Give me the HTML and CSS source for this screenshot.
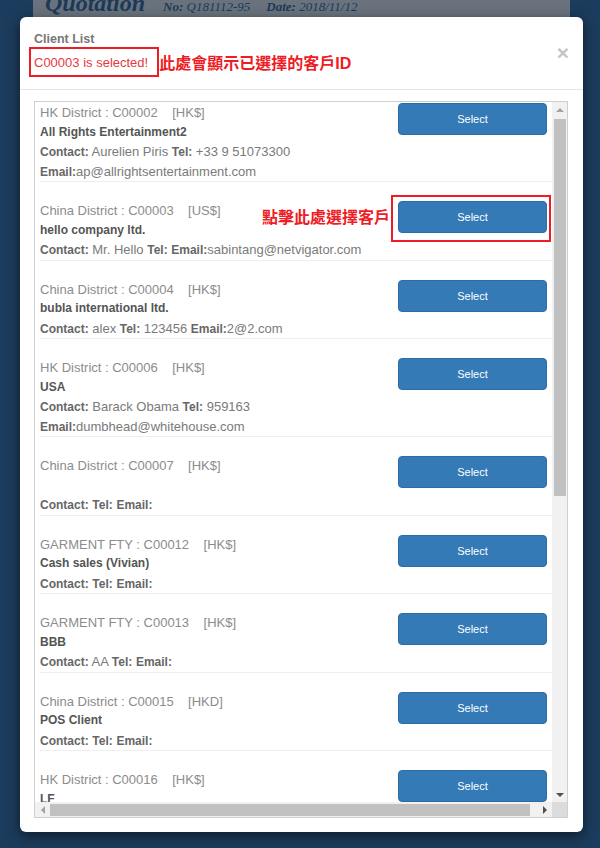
FILE: index.html
```html
<!DOCTYPE html>
<html lang="zh-Hant">
<head>
    <meta charset="UTF-8">
    <title>Client List</title>
    <link rel="stylesheet" href="styles.css">
</head>
<body>
<div class="page">
    <div class="quote-head">
        <span class="quote-title">Quotation</span>
        <span class="quote-meta"><b>No:</b> Q181112-95</span>
        <span class="quote-meta"><b>Date:</b> 2018/11/12</span>
    </div>
</div>

<div class="modal">
    <div class="modal-header">
        <span class="close">&times;</span>
        <h4 class="modal-title">Client List</h4>
        <div class="selected-line">
            <span class="note-box"><span class="selected">C00003 is selected!</span></span><span class="note">此處會顯示已選擇的客戶ID</span>
        </div>
    </div>
    <div class="modal-body">
        <div class="client-box">
            <div class="viewport">
                <div class="client-list">
                    <div class="client">
                        <div class="info">
                            <div class="district">HK District : C00002&nbsp;&nbsp;&nbsp;&nbsp;[HK$]</div>
                            <div class="name">All Rights Entertainment2</div>
                            <div class="contact"><b>Contact:</b> Aurelien Piris <b>Tel:</b> +33 9 51073300 <b>Email:</b>ap@allrightsentertainment.com</div>
                        </div>
                        <div class="pick"><button class="btn-select">Select</button></div>
                    </div>
                    <div class="client">
                        <div class="info">
                            <div class="district">China District : C00003&nbsp;&nbsp;&nbsp;&nbsp;[US$]</div>
                            <div class="name">hello company ltd.</div>
                            <div class="contact"><b>Contact:</b> Mr. Hello <b>Tel:</b> <b>Email:</b>sabintang@netvigator.com</div>
                        </div>
                        <div class="pick">
                            <button class="btn-select">Select</button>
                            <span class="tip">點擊此處選擇客戶</span>
                            <span class="tip-frame"></span>
                        </div>
                    </div>
                    <div class="client">
                        <div class="info">
                            <div class="district">China District : C00004&nbsp;&nbsp;&nbsp;&nbsp;[HK$]</div>
                            <div class="name">bubla international ltd.</div>
                            <div class="contact"><b>Contact:</b> alex <b>Tel:</b> 123456 <b>Email:</b>2@2.com</div>
                        </div>
                        <div class="pick"><button class="btn-select">Select</button></div>
                    </div>
                    <div class="client">
                        <div class="info">
                            <div class="district">HK District : C00006&nbsp;&nbsp;&nbsp;&nbsp;[HK$]</div>
                            <div class="name">USA</div>
                            <div class="contact"><b>Contact:</b> Barack Obama <b>Tel:</b> 959163 <b>Email:</b>dumbhead@whitehouse.com</div>
                        </div>
                        <div class="pick"><button class="btn-select">Select</button></div>
                    </div>
                    <div class="client">
                        <div class="info">
                            <div class="district">China District : C00007&nbsp;&nbsp;&nbsp;&nbsp;[HK$]</div>
                            <div class="name"></div>
                            <div class="contact"><b>Contact:</b> <b>Tel:</b> <b>Email:</b></div>
                        </div>
                        <div class="pick"><button class="btn-select">Select</button></div>
                    </div>
                    <div class="client">
                        <div class="info">
                            <div class="district">GARMENT FTY : C00012&nbsp;&nbsp;&nbsp;&nbsp;[HK$]</div>
                            <div class="name">Cash sales (Vivian)</div>
                            <div class="contact"><b>Contact:</b> <b>Tel:</b> <b>Email:</b></div>
                        </div>
                        <div class="pick"><button class="btn-select">Select</button></div>
                    </div>
                    <div class="client">
                        <div class="info">
                            <div class="district">GARMENT FTY : C00013&nbsp;&nbsp;&nbsp;&nbsp;[HK$]</div>
                            <div class="name">BBB</div>
                            <div class="contact"><b>Contact:</b> AA <b>Tel:</b> <b>Email:</b></div>
                        </div>
                        <div class="pick"><button class="btn-select">Select</button></div>
                    </div>
                    <div class="client">
                        <div class="info">
                            <div class="district">China District : C00015&nbsp;&nbsp;&nbsp;&nbsp;[HKD]</div>
                            <div class="name">POS Client</div>
                            <div class="contact"><b>Contact:</b> <b>Tel:</b> <b>Email:</b></div>
                        </div>
                        <div class="pick"><button class="btn-select">Select</button></div>
                    </div>
                    <div class="client">
                        <div class="info">
                            <div class="district">HK District : C00016&nbsp;&nbsp;&nbsp;&nbsp;[HK$]</div>
                            <div class="name">LF</div>
                            <div class="contact"><b>Contact:</b> <b>Tel:</b> <b>Email:</b></div>
                        </div>
                        <div class="pick"><button class="btn-select">Select</button></div>
                    </div>
                </div>
            </div>
            <div class="vbar">
                <span class="arrow arrow-up"></span>
                <span class="thumb thumb-v"></span>
                <span class="arrow arrow-down"></span>
            </div>
            <div class="hbar">
                <span class="arrow arrow-left"></span>
                <span class="thumb thumb-h"></span>
                <span class="arrow arrow-right"></span>
            </div>
            <div class="corner"></div>
        </div>
    </div>
</div>
</body>
</html>
```

FILE: styles.css
```css
* {
    padding: 0;
    margin: 0;
    box-sizing: border-box;
}

body {
    background: #1c3c5d;
    font-family: "Liberation Sans", Arial, "Noto Sans CJK TC", sans-serif;
    width: 600px;
    height: 848px;
    overflow: hidden;
    position: relative;
}

/* page behind the dialog */
.page {
    margin-left: 33px;
    width: 537px;
    height: 120px;
    background: #6a737d;
    overflow: hidden;
}

.quote-head {
    margin-top: -9px;
    padding-left: 12px;
    line-height: 24px;
    color: #1c3a58;
    font-family: "Liberation Serif", serif;
    font-style: italic;
    white-space: nowrap;
}

.quote-title {
    font-size: 24px;
    font-weight: bold;
    margin-right: 14px;
}

.quote-meta {
    font-size: 13px;
    margin-right: 12px;
}

/* dialog */
.modal {
    position: absolute;
    left: 20px;
    top: 17px;
    width: 563px;
    height: 815px;
    background: #fff;
    border-radius: 6px;
    box-shadow: 0 4px 14px rgba(0, 0, 0, .55);
}

.modal-header {
    position: relative;
    padding: 14px 15px 12px 14px;
    border-bottom: 1px solid #e5e5e5;
}

.modal-title {
    font-size: 12.5px;
    line-height: 16px;
    color: #777;
}

.close {
    position: absolute;
    top: 25px;
    right: 14px;
    font-size: 21px;
    line-height: 1;
    font-weight: bold;
    color: #c4c4c4;
}

.selected-line {
    display: flex;
    align-items: center;
    margin-left: -5px;
}

.note-box {
    border: 2px solid #ee1c24;
    padding: 3px 9px 3px 3px;
    line-height: 19px;
}

.selected {
    font-size: 13px;
    color: #e8383d;
}

.note {
    font-size: 16px;
    font-weight: bold;
    color: #ee1c24;
    font-family: "Liberation Sans", "Noto Sans CJK TC", sans-serif;
}

.modal-body {
    padding: 11px 15px 14px 14px;
}

/* list box with its scrollbars */
.client-box {
    height: 717px;
    border: 1px solid #cfcfcf;
    display: grid;
    grid-template-columns: 1fr 15px;
    grid-template-rows: 1fr 15px;
}

.viewport {
    overflow: hidden;
}

.client-list {
    width: 530px;
    padding: 1px 0 0 5px;
}

.client {
    display: flex;
    border-bottom: 1px solid #efefef;
    margin-bottom: 19px;
    font-size: 13px;
    line-height: 19.5px;
}

.info {
    width: 350px;
    color: #7a7a7a;
}

.district {
    color: #8c8c8c;
}

.name {
    font-size: 12px;
    font-weight: bold;
    color: #555;
    height: 19.5px;
}

.contact b {
    font-size: 12px;
    line-height: 1;
    color: #666;
}

.pick {
    position: relative;
    margin-left: 8px;
}

.btn-select {
    display: block;
    width: 149px;
    height: 32px;
    background: #337ab7;
    border: 1px solid #2e6da4;
    border-radius: 4px;
    color: #fff;
    font-family: "Liberation Sans", Arial, sans-serif;
    font-size: 11px;
}

.tip {
    position: absolute;
    right: calc(100% + 8px);
    top: 7px;
    white-space: nowrap;
    font-size: 16px;
    font-weight: bold;
    color: #ee1c24;
    font-family: "Liberation Sans", "Noto Sans CJK TC", sans-serif;
    line-height: 19px;
}

.tip-frame {
    position: absolute;
    left: -7px;
    top: -6px;
    width: 160px;
    height: 47px;
    border: 2px solid #ee1c24;
}

.vbar {
    background: #f1f1f1;
    display: flex;
    flex-direction: column;
}

.hbar {
    background: #f1f1f1;
    display: flex;
    align-items: stretch;
}

.corner {
    background: #dcdcdc;
}

.arrow {
    width: 15px;
    height: 15px;
    flex: none;
    display: flex;
    align-items: center;
    justify-content: center;
}

.arrow::before {
    content: "";
    width: 0;
    height: 0;
}

.arrow-up::before {
    border-left: 4px solid transparent;
    border-right: 4px solid transparent;
    border-bottom: 4px solid #a3a3a3;
}

.arrow-down {
    margin-top: auto;
}

.arrow-down::before {
    border-left: 4px solid transparent;
    border-right: 4px solid transparent;
    border-top: 4px solid #505050;
}

.arrow-left::before {
    border-top: 4px solid transparent;
    border-bottom: 4px solid transparent;
    border-right: 4px solid #a3a3a3;
}

.arrow-right {
    margin-left: auto;
}

.arrow-right::before {
    border-top: 4px solid transparent;
    border-bottom: 4px solid transparent;
    border-left: 4px solid #505050;
}

.thumb {
    background: #c1c1c1;
}

.thumb-v {
    height: 377px;
    margin: 2px 1px 0 2px;
}

.thumb-h {
    width: 480px;
    margin: 2px 0 1px 0;
}
```
